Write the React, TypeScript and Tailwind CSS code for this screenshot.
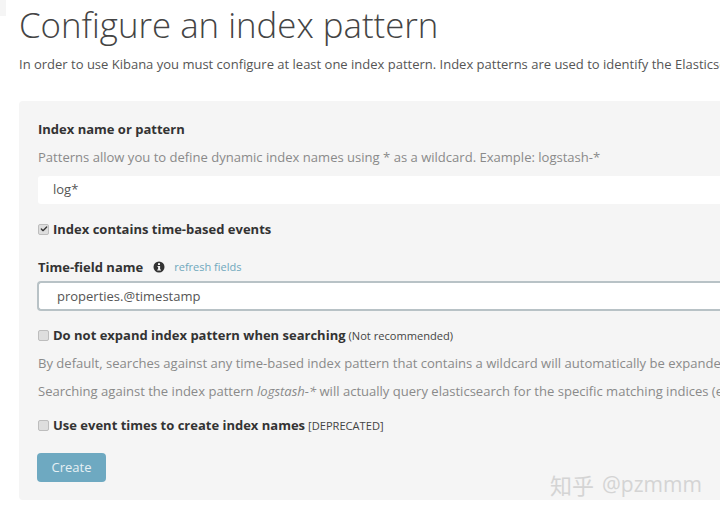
import { Check } from "lucide-react";

function Box({ checked }: { checked?: boolean }) {
  return (
    <span className="-mt-[2px] flex h-[11px] w-[11px] shrink-0 items-center justify-center rounded-[2px] border border-[#bdbdbd] bg-[#dedede]">
      {checked && <Check size={8} strokeWidth={4} className="text-[#333]" />}
    </span>
  );
}

export default function App() {
  return (
    <div className="relative h-[517px] w-[720px] overflow-hidden bg-white font-['Open_Sans',sans-serif] text-[#444]">
      {/* leftover corner of the nav in the crop */}
      <div className="absolute left-0 top-0 h-4 w-[6px] bg-[#f5f5f5]" />

      <div className="pl-[19px]">
        <h1 className="h-[52px] whitespace-nowrap text-[34.8px] font-light leading-[50px] text-[#444]">
          Configure an index pattern
        </h1>
        <p className="mt-[2px] h-5 whitespace-nowrap text-[13px] leading-5 text-[#555]">
          In order to use Kibana you must configure at least one index pattern. Index patterns are used to identify the Elasticsearch index to run search and analytics against.
        </p>

        <div className="mt-[27px] h-[399px] rounded-l-[4px] bg-[#f5f5f5] pl-[19px] pt-[18px]">
          <div className="h-5 text-[13px] font-bold leading-5 text-[#333]">Index name or pattern</div>
          <p className="mt-2 h-5 whitespace-nowrap text-[13.05px] leading-5 text-[#8a8a8a]">
            Patterns allow you to define dynamic index names using * as a wildcard. Example: logstash-*
          </p>
          <div className="mt-[9px] flex h-[28px] items-center rounded-l-[3px] bg-white pl-[15px] text-[13px] text-[#555]">
            log*
          </div>

          <div className="mt-4 flex h-5 items-center gap-[4px] text-[13px] font-bold text-[#333]">
            <Box checked />
            <span>Index contains time-based events</span>
          </div>

          <div className="mt-[17px] flex h-5 items-center text-[13px] leading-5">
            <span className="font-bold text-[#333]">Time-field name</span>
            <svg viewBox="0 0 12 12" className="ml-[10px] h-3 w-3">
              <circle cx="6" cy="6" r="5.5" fill="#333" />
              <rect x="5" y="2.2" width="2" height="1.8" fill="#f5f5f5" />
              <path d="M4.5 5h2.6v3.4h.9v1H4.2v-1h.9V6h-.6z" fill="#f5f5f5" />
            </svg>
            <span className="ml-[9px] text-[11px] text-[#6fa8bd]">refresh fields</span>
          </div>
          <div className="-ml-px mt-[4px] flex h-[30px] items-center rounded-l-[4px] border-y-2 border-l-2 border-[#b8c2c6] bg-white pl-[18px] pt-[1px] text-[13px] text-[#555]">
            properties.@timestamp
          </div>

          <div className="mt-[15px] flex h-5 items-center gap-[4px] whitespace-nowrap text-[13px] font-bold text-[#333]">
            <Box />
            <span>Do not expand index pattern when searching</span>
            <span className="-ml-[1px] text-[11.1px] font-normal text-[#444]">(Not recommended)</span>
          </div>
          <p className="mt-[7px] h-5 whitespace-nowrap text-[13.05px] leading-5 text-[#8a8a8a]">
            By default, searches against any time-based index pattern that contains a wildcard will automatically be expanded to query only the indices that contain data.
          </p>
          <p className="mt-2 h-5 whitespace-nowrap text-[13.05px] leading-5 text-[#8a8a8a]">
            Searching against the index pattern <em>logstash-*</em> will actually query elasticsearch for the specific matching indices (e.g. logstash-2015.12.21).
          </p>

          <div className="mt-[15px] flex h-5 items-center gap-[4px] whitespace-nowrap text-[13px] font-bold text-[#333]">
            <Box />
            <span>Use event times to create index names</span>
            <span className="-ml-[1px] text-[11.1px] font-normal text-[#444]">[DEPRECATED]</span>
          </div>

          <button className="-ml-px mt-[17px] block h-[29px] w-[69px] rounded-[4px] bg-[#6ea9c1] text-[13px] text-[#e6f0f4]">
            Create
          </button>
        </div>
      </div>

      {/* watermark */}
      <div className="absolute left-[550px] top-[472px] flex items-center gap-[8px] whitespace-nowrap text-[21px] leading-6 text-[#d4d4d4]">
        <span className="font-['Noto_Sans_CJK_SC',sans-serif] text-[22px]">知乎</span>
        <span>@pzmmm</span>
      </div>
    </div>
  );
}
